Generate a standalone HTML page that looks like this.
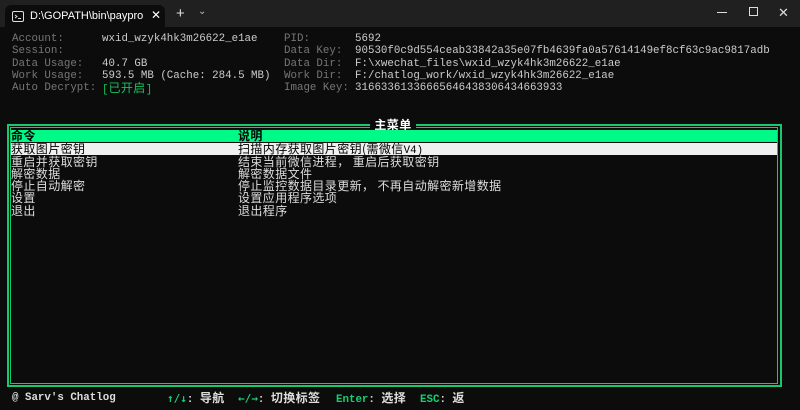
<!DOCTYPE html>
<html><head><meta charset="utf-8"><style>
*{margin:0;padding:0;box-sizing:border-box}
body{width:800px;height:410px;background:#0c0c0c;overflow:hidden;position:relative;font-family:"Liberation Mono","Noto Sans CJK SC",monospace;font-size:10.8px;color:#cccccc}
.tb{position:absolute;left:0;top:0;width:800px;height:27px;background:#202020}
.tab{position:absolute;left:5px;top:5px;width:160px;height:22px;background:#0c0c0c;border-radius:6px 6px 0 0;color:#fff;font-family:"Liberation Sans",sans-serif;font-size:11px;overflow:hidden}
.t{position:absolute;white-space:pre;line-height:12.3px}
.g{color:#767676}
.w{color:#cccccc}
.c{font-family:"Noto Sans CJK SC",sans-serif;font-size:12px;letter-spacing:0.4px}
.box1{position:absolute;left:7px;top:124px;width:775px;height:263px;border:2px solid #16c86e}
.box2{position:absolute;left:10px;top:127px;width:768px;height:257px;border:1px solid #16c86e}
.hdr{position:absolute;left:11px;top:130px;width:766px;height:12px;background:#00fa88;color:#000;white-space:nowrap}
.sel{position:absolute;left:11px;top:143px;width:766px;height:12px;background:#f0f0f0;color:#000;white-space:nowrap}
.row{position:absolute;left:11px;height:12px;width:766px;color:#ddd;line-height:12px;white-space:pre}
.hdr>span,.sel>span{line-height:12px;position:absolute;top:0;white-space:nowrap}
.c2{position:absolute;left:227px;white-space:nowrap}
.gr{color:#16d070;font-weight:bold}
.ar{font-family:"DejaVu Sans Mono",monospace;font-size:11px}
.f{position:absolute;top:392px;line-height:12px;white-space:pre;color:#ddd;font-weight:bold}
</style></head><body>
<div class="tb">
 <div class="tab">
  <svg style="position:absolute;left:7px;top:6px" width="12" height="11" viewBox="0 0 12 11"><rect x="0.5" y="0.5" width="11" height="10" rx="1.5" fill="none" stroke="#ddd"/><path d="M3 4l2 1.5-2 1.5M6 7.5h3" stroke="#ddd" fill="none"/></svg>
  <span style="position:absolute;left:25px;top:5px;white-space:nowrap;width:113px;overflow:hidden">D:\GOPATH\bin\paypro.exe</span>
  <span style="position:absolute;left:146px;top:3px;font-size:12px">✕</span>
 </div>
 <span style="position:absolute;left:176px;top:5px;color:#ddd;font-family:'Liberation Sans';font-size:15px">+</span>
 <span style="position:absolute;left:198px;top:6px;color:#bbb;font-family:'Liberation Sans';font-size:10px">⌄</span>
 <div style="position:absolute;left:717px;top:12px;width:10px;height:1px;background:#ddd"></div>
 <div style="position:absolute;left:749px;top:7px;width:9px;height:9px;border:1px solid #ddd"></div>
 <span style="position:absolute;left:778px;top:5px;color:#ddd;font-family:'Liberation Sans';font-size:13px">✕</span>
</div>

<div class="t g" style="left:12px;top:33px">Account:<br>Session:<br>Data Usage:<br>Work Usage:<br>Auto Decrypt:</div>
<div class="t w" style="left:102px;top:33px">wxid_wzyk4hk3m26622_e1ae<br><br>40.7 GB<br>593.5 MB (Cache: 284.5 MB)<br><span style="color:#16c060">[<span class="c">已开启</span>]</span></div>
<div class="t g" style="left:284px;top:33px">PID:<br>Data Key:<br>Data Dir:<br>Work Dir:<br>Image Key:</div>
<div class="t w" style="left:355px;top:33px">5692<br>90530f0c9d554ceab33842a35e07fb4639fa0a57614149ef8cf63c9ac9817adb<br>F:\xwechat_files\wxid_wzyk4hk3m26622_e1ae<br>F:/chatlog_work/wxid_wzyk4hk3m26622_e1ae<br>31663361336665646438306434663933</div>

<div class="box1"></div>
<div class="box2"></div>
<div class="c" style="position:absolute;left:370px;top:118px;width:46px;height:13px;background:#0c0c0c;color:#fff;font-weight:bold;text-align:center;line-height:13px">主菜单</div>
<div class="hdr"><span class="c" style="font-weight:bold;left:0">命令</span><span class="c c2" style="font-weight:bold">说明</span></div>
<div class="sel"><span class="c" style="left:0">获取图片密钥</span><span class="c2"><span class="c">扫描内存获取图片密钥(需微信</span>V4)</span></div>
<div class="row c" style="top:155.5px">重启并获取密钥<span class="c2">结束当前微信进程， 重启后获取密钥</span></div>
<div class="row c" style="top:167.8px">解密数据<span class="c2">解密数据文件</span></div>
<div class="row c" style="top:180.1px">停止自动解密<span class="c2">停止监控数据目录更新， 不再自动解密新增数据</span></div>
<div class="row c" style="top:192.4px">设置<span class="c2">设置应用程序选项</span></div>
<div class="row c" style="top:204.7px">退出<span class="c2">退出程序</span></div>

<div class="f" style="left:12px">@ Sarv's Chatlog</div>
<div class="f" style="left:167px"><span class="gr ar">↑/↓</span>: <span class="c">导航</span></div>
<div class="f" style="left:238px"><span class="gr ar">←/→</span>: <span class="c">切换标签</span></div>
<div class="f" style="left:336px"><span class="gr">Enter</span>: <span class="c">选择</span></div>
<div class="f" style="left:420px"><span class="gr">ESC</span>: <span class="c">返</span></div>
</body></html>
